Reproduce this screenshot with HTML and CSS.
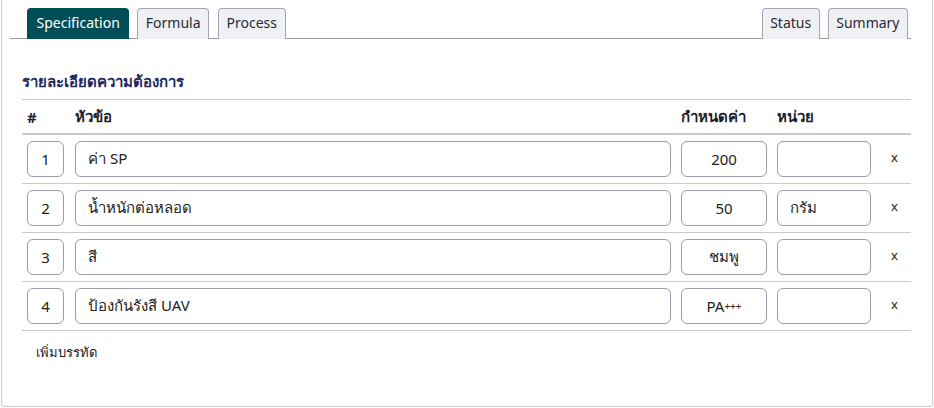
FILE: index.html
```html
<!DOCTYPE html>
<html lang="th">
<head>
<meta charset="utf-8">
<link rel="stylesheet" href="styles.css">
</head>
<body>
<div class="panel">
  <div class="tabbar">
    <div class="tabs-left">
      <div class="tab active">Specification</div>
      <div class="tab">Formula</div>
      <div class="tab">Process</div>
    </div>
    <div class="tabs-right">
      <div class="tab">Status</div>
      <div class="tab">Summary</div>
    </div>
  </div>
  <div class="content">
    <h2 class="title">รายละเอียดความต้องการ</h2>
    <div class="table">
      <div class="row head">
        <div class="c-num">#</div>
        <div class="c-topic">หัวข้อ</div>
        <div class="c-val">กำหนดค่า</div>
        <div class="c-unit">หน่วย</div>
        <div class="c-del"></div>
      </div>
      <div class="row">
        <div class="c-num"><div class="field center">1</div></div>
        <div class="c-topic"><div class="field">ค่า SP</div></div>
        <div class="c-val"><div class="field center">200</div></div>
        <div class="c-unit"><div class="field"></div></div>
        <div class="c-del">x</div>
      </div>
      <div class="row">
        <div class="c-num"><div class="field center">2</div></div>
        <div class="c-topic"><div class="field">น้ำหนักต่อหลอด</div></div>
        <div class="c-val"><div class="field center">50</div></div>
        <div class="c-unit"><div class="field">กรัม</div></div>
        <div class="c-del">x</div>
      </div>
      <div class="row">
        <div class="c-num"><div class="field center">3</div></div>
        <div class="c-topic"><div class="field">สี</div></div>
        <div class="c-val"><div class="field center">ชมพู</div></div>
        <div class="c-unit"><div class="field"></div></div>
        <div class="c-del">x</div>
      </div>
      <div class="row">
        <div class="c-num"><div class="field center">4</div></div>
        <div class="c-topic"><div class="field">ป้องกันรังสี UAV</div></div>
        <div class="c-val"><div class="field center">PA<span class="plus">+++</span></div></div>
        <div class="c-unit"><div class="field"></div></div>
        <div class="c-del">x</div>
      </div>
    </div>
    <div class="add">เพิ่มบรรทัด</div>
  </div>
</div>
</body>
</html>
```
FILE: styles.css
```css
* { box-sizing: border-box; }
html, body { margin: 0; padding: 0; background: #fff; }
body {
  font-family: "Noto Sans", "Liberation Sans", sans-serif;
  color: #222;
  width: 934px;
  height: 408px;
  overflow: hidden;
}
.panel {
  margin-left: 1px;
  width: 932px;
  height: 407px;
  border: 1px solid #c9c9d3;
  border-top: none;
  border-radius: 0 0 4px 4px;
  padding: 8px 21px 0 8px;
}
.tabbar {
  display: flex;
  justify-content: space-between;
  border-bottom: 1px solid #9a9aa6;
  padding: 0 3px 0 17px;
  height: 31px;
}
.tabs-left, .tabs-right { display: flex; gap: 8px; }
.tabs-left .tab:nth-child(3) { margin-left: 1px; }
.tab {
  height: 31px;
  padding: 0 7.5px 3px;
  display: flex;
  align-items: center;
  font-size: 14px;
  color: #2a2a3a;
  background: #eff0f4;
  border: 1px solid #a4a4b4;
  border-bottom: none;
  border-radius: 4px 4px 0 0;
}
.tab.active {
  background: #014e57;
  color: #fff;
  border-color: #014e57;
  padding: 0 8.5px 3px;
}
.content { padding: 26px 0 0 12px; }
.title {
  margin: 0;
  font-size: 15px;
  font-weight: bold;
  color: #1c2a5c;
  height: 34px;
  line-height: 20px;
  padding-top: 6px;
}
.table { border-top: 1px solid #c9c9d3; }
.row {
  display: grid;
  grid-template-columns: 48px 606px 96px 94px 40px;
  align-items: center;
  border-bottom: 1px solid #c9c9d3;
  height: 49px;
  padding-left: 5px;
}
.row.head {
  height: 35px;
  border-bottom: 2px solid #c9c9d3;
  font-weight: bold;
  font-size: 15px;
  color: #1e1e28;
}
.row > div { min-width: 0; }
.field {
  height: 36px;
  border: 1px solid #9c9caa;
  border-radius: 6px;
  display: flex;
  align-items: center;
  padding: 0 12px;
  font-size: 15px;
  color: #222;
}
.c-num .field { width: 37px; padding: 0; }
.c-topic .field { width: 596px; }
.c-val .field { width: 86px; }
.c-unit .field { width: 94px; }
.field.center { justify-content: center; padding: 0; }
.plus { font-size: 10px; }
.c-del { font-size: 13px; padding-left: 20px; color: #222; padding-bottom: 4px; }
.add { font-size: 13px; padding: 11px 0 0 14px; color: #222; }
```
